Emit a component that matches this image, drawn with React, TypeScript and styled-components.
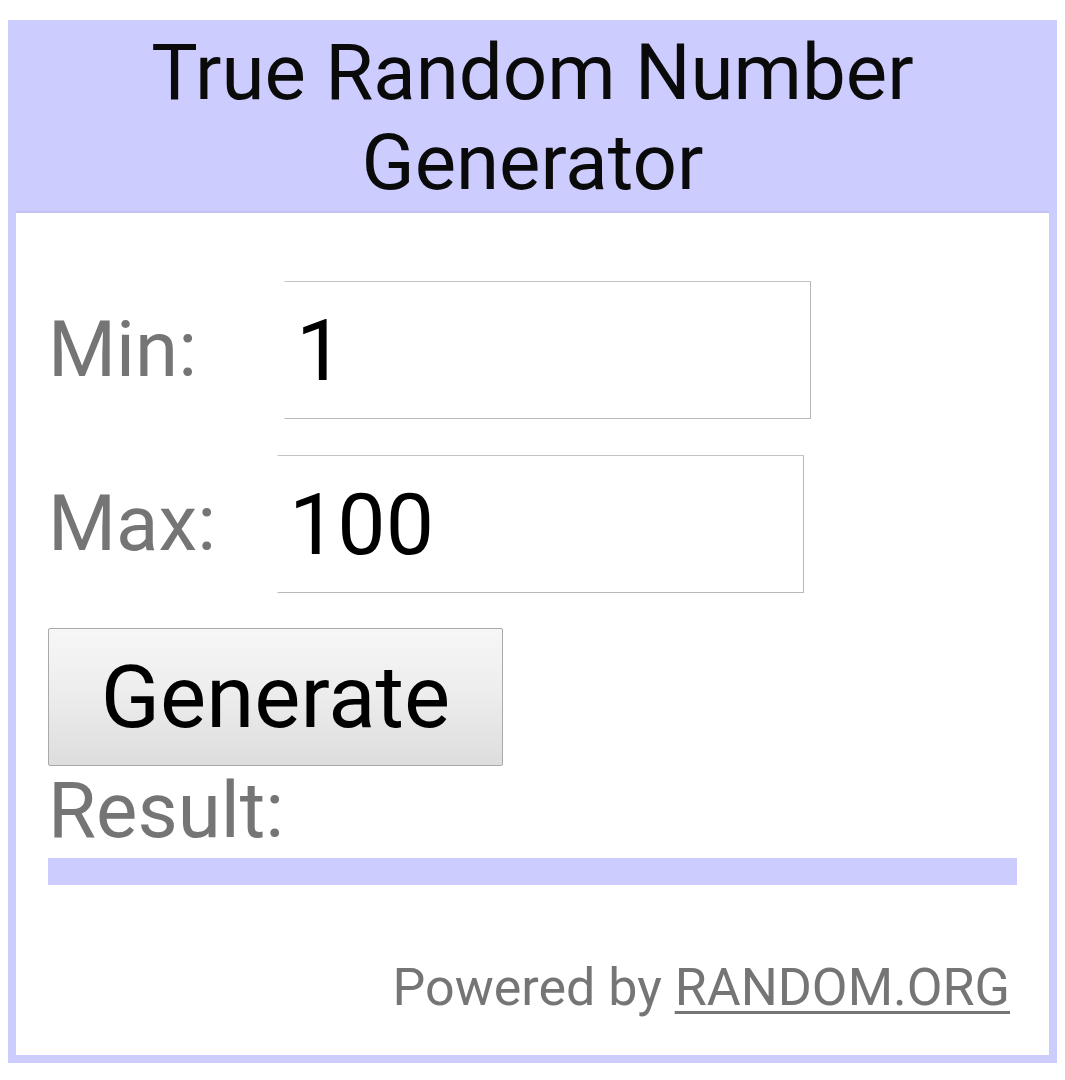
import styled, { createGlobalStyle } from "styled-components";

const GlobalStyle = createGlobalStyle`
  html, body {
    margin: 0;
    padding: 0;
    background: #ffffff;
  }
  body {
    font-family: Roboto, "Liberation Sans", Arial, sans-serif;
  }
`;

const BLUE = "#ccccff";

interface InputProps {
  $shift?: number;
}

const App = () => {
  return (
    <>
      <GlobalStyle />
      <Frame>
        <Header>
          <Title>
            True Random Number
            <br />
            Generator
          </Title>
        </Header>
        <Body>
          <Row>
            <Label>Min:</Label>
            <NumberInput defaultValue="1" />
          </Row>
          <Row style={{ marginTop: 36 }}>
            <Label>Max:</Label>
            <NumberInput $shift={-7} defaultValue="100" />
          </Row>
          <GenerateButton>Generate</GenerateButton>
          <ResultLabel>Result:</ResultLabel>
          <ResultBar />
          <Footer>
            Powered by <FooterLink href="#">RANDOM.ORG</FooterLink>
          </Footer>
        </Body>
      </Frame>
    </>
  );
};

export default App;

const Frame = styled.div`
  margin: 20px 8px 0 8px;
  border: 8px solid ${BLUE};
  display: flex;
  flex-direction: column;
  background: #ffffff;
`;

const Header = styled.div`
  background-color: ${BLUE};
  padding: 0 0 3px 0;
  border-bottom: 2px solid #c3c3f3;
  display: flex;
  justify-content: center;
`;

const Title = styled.h1`
  margin: 0;
  font-family: Roboto, "Liberation Sans", sans-serif;
  font-weight: 400;
  font-size: 78px;
  line-height: 90px;
  color: #0a0a0a;
  text-align: center;
`;

const Body = styled.div`
  padding: 68px 32px 41px 32px;
  display: flex;
  flex-direction: column;
`;

const Row = styled.div`
  display: flex;
  align-items: center;
  height: 138px;
`;

const Label = styled.span`
  width: 236px;
  flex-shrink: 0;
  font-size: 78px;
  line-height: 1;
  color: #757575;
`;

const NumberInput = styled.input<InputProps>`
  box-sizing: border-box;
  width: 527px;
  height: 138px;
  margin-left: ${(p) => p.$shift ?? 0}px;
  padding: 0 0 0 11px;
  border-top: 1px solid #c4c4c4;
  border-right: 1px solid #b8b8b8;
  border-bottom: 1px solid #b8b8b8;
  border-left: 1px solid transparent;
  border-radius: 0;
  background: #ffffff;
  font-family: Roboto, "Liberation Sans", sans-serif;
  font-size: 86px;
  color: #000000;
  outline: none;
`;

const GenerateButton = styled.button`
  box-sizing: border-box;
  margin-top: 35px;
  width: 455px;
  height: 138px;
  border: 1px solid #a9a9a9;
  border-radius: 2px;
  background: linear-gradient(to bottom, #f7f7f7 0%, #ececec 50%, #dddddd 100%);
  font-family: Roboto, "Liberation Sans", sans-serif;
  font-size: 87px;
  line-height: 1;
  color: #000000;
  padding: 0;
  display: flex;
  align-items: center;
  justify-content: center;
`;

const ResultLabel = styled.div`
  margin-top: 6px;
  font-size: 78px;
  line-height: 1;
  color: #757575;
`;

const ResultBar = styled.div`
  margin-top: 8px;
  height: 27px;
  background-color: ${BLUE};
`;

const Footer = styled.div`
  margin-top: 77px;
  padding-right: 7px;
  text-align: right;
  font-size: 52px;
  line-height: 1;
  color: #757575;
`;

const FooterLink = styled.a`
  color: #757575;
  text-decoration: underline;
  text-decoration-thickness: 3px;
  text-underline-offset: 6px;
`;
